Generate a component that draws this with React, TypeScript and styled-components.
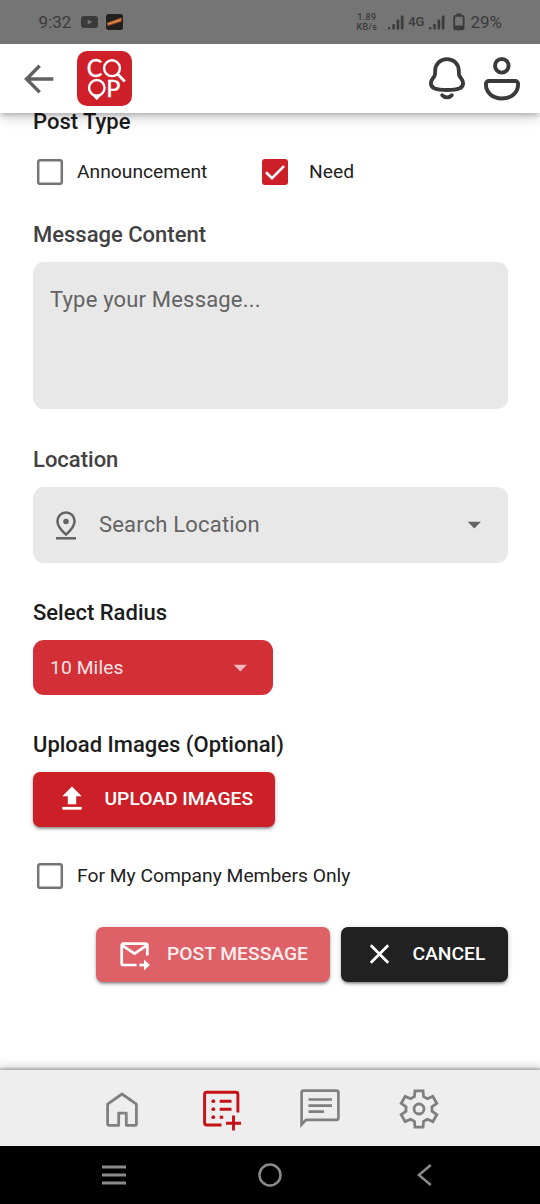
import React from "react";
import styled, { createGlobalStyle } from "styled-components";

const GlobalStyle = createGlobalStyle`
  * { box-sizing: border-box; }
  body { margin: 0; background: #fff; font-family: Roboto, "Liberation Sans", sans-serif; color: #212121; }
  button { font: inherit; border: 0; padding: 0; background: none; color: inherit; }
  svg { display: block; flex: none; overflow: visible; }
`;

const Screen = styled.div`
  width: 540px;
  height: 1204px;
  display: flex;
  flex-direction: column;
  overflow: hidden;
  background: #fff;
`;

const StatusBar = styled.div`
  height: 44px;
  flex: none;
  display: flex;
  align-items: center;
  justify-content: space-between;
  padding: 0 38px 0 38.5px;
  background: #757575;
  color: #3b3b3b;
  font-size: 17px;
  letter-spacing: 0.2px;
`;

const StatusGroup = styled.div`
  display: flex;
  align-items: center;
`;

const StatusText = styled.span<{ $size?: number; $left?: number; $weight?: number }>`
  font-size: ${(p) => p.$size ?? 17}px;
  font-weight: ${(p) => p.$weight ?? 400};
  margin-left: ${(p) => p.$left ?? 0}px;
  line-height: 20px;
  letter-spacing: 0;
`;

const StatusIcon = styled.span<{ $left: number }>`
  margin-left: ${(p) => p.$left}px;
`;

const NetSpeed = styled.div`
  font-size: 9px;
  font-weight: 500;
  line-height: 10px;
  text-align: center;
  letter-spacing: 0.3px;
`;

const Header = styled.header`
  position: relative;
  z-index: 1;
  height: 69px;
  flex: none;
  display: flex;
  align-items: center;
  padding: 0 20px 0 24px;
  background: #fff;
  box-shadow: 0 3px 5px -1px rgba(0, 0, 0, 0.22), 0 6px 12px rgba(0, 0, 0, 0.14);
`;

const LogoSlot = styled.div`
  margin-left: 23px;
  margin-right: auto;
`;

const HeaderActions = styled.div`
  display: flex;
  align-items: center;
  gap: 18px;
`;

const Main = styled.main`
  flex: 1;
  min-height: 0;
  margin-top: -4px;
  padding: 0 32.5px 0 33px;
`;

const Label = styled.div<{ $soft?: boolean; $top?: number }>`
  margin-top: ${(p) => p.$top ?? 0}px;
  height: 24px;
  line-height: 26px;
  font-size: 22px;
  font-weight: 500;
  white-space: nowrap;
  color: ${(p) => (p.$soft ? "#424242" : "#1c1c1c")};
`;

const CheckRow = styled.div<{ $top: number }>`
  display: flex;
  align-items: center;
  height: 28px;
  margin-top: ${(p) => p.$top}px;
  padding-left: 4px;
`;

const CheckLabel = styled.label<{ $gap: number; $width?: number }>`
  display: flex;
  align-items: center;
  gap: ${(p) => p.$gap}px;
  width: ${(p) => (p.$width ? `${p.$width}px` : "auto")};
  font-size: 19.25px;
  line-height: 24px;
  white-space: nowrap;
`;

const Field = styled.div<{ $height: number; $area?: boolean }>`
  display: flex;
  align-items: ${(p) => (p.$area ? "flex-start" : "center")};
  height: ${(p) => p.$height}px;
  margin-top: 16px;
  padding: ${(p) => (p.$area ? "25px 17px" : "0 26px 0 22px")};
  border-radius: 11px;
  background: #e8e8e8;
  color: #636363;
  font-size: 22px;
  line-height: 26px;
  letter-spacing: 0.18px;
`;

const FieldText = styled.span`
  flex: 1;
  margin-left: 22px;
`;

const RadiusSelect = styled.div`
  display: flex;
  align-items: center;
  justify-content: space-between;
  width: 240px;
  height: 55px;
  margin-top: 16px;
  padding: 0 25px 0 17px;
  border-radius: 11px;
  background: #d22f37;
  color: #fbe4e5;
  font-size: 19.25px;
  letter-spacing: 0.1px;
`;

const Button = styled.button<{ $width: number; $bg: string; $left: number; $gap: number; $top?: number; $color?: string }>`
  display: flex;
  align-items: center;
  width: ${(p) => p.$width}px;
  height: 55px;
  margin-top: ${(p) => p.$top ?? 0}px;
  padding: 0 0 2px ${(p) => p.$left}px;
  gap: ${(p) => p.$gap}px;
  border-radius: 7px;
  background: ${(p) => p.$bg};
  color: ${(p) => p.$color ?? "#fff"};
  font-size: 19.25px;
  font-weight: 500;
  white-space: nowrap;
  box-shadow: 0 3px 3px -2px rgba(0, 0, 0, 0.3), 0 2px 3px rgba(0, 0, 0, 0.2), 0 1px 6px rgba(0, 0, 0, 0.14);
`;

const Actions = styled.div`
  display: flex;
  justify-content: flex-end;
  gap: 11px;
  margin-top: 37px;
`;

const BottomNav = styled.nav`
  flex: none;
  height: 76px;
  display: flex;
  align-items: center;
  justify-content: center;
  background: #eee;
  box-shadow: 0 -1px 2px 1px rgba(0, 0, 0, 0.22), 0 -3px 9px 1px rgba(0, 0, 0, 0.16);
`;

const NavItem = styled.button`
  width: 99px;
  height: 76px;
  padding-top: 1px;
  display: flex;
  align-items: center;
  justify-content: center;
`;

const SystemNav = styled.div`
  flex: none;
  height: 58px;
  display: flex;
  align-items: center;
  justify-content: space-between;
  padding: 0 108px 0 101px;
  background: #000;
`;

const HomeSlot = styled.div`
  margin-right: 5px;
`;

const Signal = () => (
  <svg width="16" height="15" fill="#3b3b3b">
    <rect x="0" y="12" width="2.4" height="2.6" rx="1" />
    <rect x="4.3" y="9" width="2.6" height="5.6" rx="1" />
    <rect x="8.6" y="4.5" width="2.6" height="10" rx="1" />
    <rect x="12.8" y="0.5" width="2.7" height="14" rx="1" />
  </svg>
);

const Caret = ({ color }: { color: string }) => (
  <svg width="15" height="8">
    <path d="M0.7 0.8h13.2L7.3 7.5z" fill={color} />
  </svg>
);

const Checkbox = ({ checked = false }: { checked?: boolean }) => (
  <svg width="26" height="26">
    {checked ? (
      <>
        <rect width="26" height="26" rx="3" fill="#cc1f27" />
        <path d="M4 13.2l6 6L22 7.1" fill="none" stroke="#fff" strokeWidth="2.7" />
      </>
    ) : (
      <rect x="1.2" y="1.2" width="23.6" height="23.6" rx="1.8" fill="none" stroke="#757575" strokeWidth="2.5" />
    )}
  </svg>
);

const Logo = () => (
  <svg width="55" height="55">
    <rect width="55" height="55" rx="10" fill="#cf2029" />
    <g fontFamily="Lato, sans-serif" fill="#fff" stroke="#fff" strokeWidth="0.4">
      <text x="9.8" y="26.2" fontSize="25" textLength="15.5" lengthAdjust="spacingAndGlyphs">C</text>
      <text x="29.2" y="46" fontSize="23.5">P</text>
    </g>
    <g fill="none" stroke="#fff" strokeWidth="2.4">
      <circle cx="35" cy="17.2" r="7.9" />
      <path d="M40 22.4l7.8 8" strokeWidth="2.8" />
      <circle cx="19.8" cy="36.8" r="7.8" />
    </g>
    <path d="M14 42.4Q19.8 46 25.6 42.4L19.8 48.8z" fill="#fff" stroke="#fff" strokeWidth="0.8" />
  </svg>
);

export default function App() {
  return (
    <Screen>
      <GlobalStyle />
      <StatusBar>
        <StatusGroup>
          <StatusText>9:32</StatusText>
          <StatusIcon $left={10}>
            <svg width="17" height="12">
              <rect width="17" height="12" rx="3" fill="#3b3b3b" />
              <path d="M6.7 3.4v5.2L11.2 6z" fill="#757575" />
            </svg>
          </StatusIcon>
          <StatusIcon $left={8}>
            <svg width="17" height="16">
              <rect width="17" height="16" rx="2.5" fill="#22201e" />
              <path d="M1 8.7L15.8 3.5l-.4 4.2L1.5 12z" fill="#b4552a" />
              <path d="M2 9.6l13-4.5-.5 1.5L2.5 10.5z" fill="#d9a04a" />
            </svg>
          </StatusIcon>
        </StatusGroup>
        <StatusGroup>
          <NetSpeed>
            1.89
            <br />
            KB/s
          </NetSpeed>
          <StatusIcon $left={11}><Signal /></StatusIcon>
          <StatusText $size={13} $left={4} $weight={500}>4G</StatusText>
          <StatusIcon $left={5}><Signal /></StatusIcon>
          <StatusIcon $left={8}>
            <svg width="12" height="18">
              <path d="M3.5 0.5h5v2h-5z" fill="#3b3b3b" />
              <rect x="1.2" y="2.8" width="9.4" height="13.6" rx="1.2" fill="none" stroke="#3b3b3b" strokeWidth="1.8" />
              <path d="M1 12.5h10v4H1z" fill="#3b3b3b" />
            </svg>
          </StatusIcon>
          <StatusText $left={5}>29%</StatusText>
        </StatusGroup>
      </StatusBar>

      <Header>
        <svg width="30" height="28" fill="none" stroke="#616161" strokeWidth="3.4">
          <path d="M29.3 14H2.5M15.7 0.8L2.5 14l13.2 13.2" />
        </svg>
        <LogoSlot><Logo /></LogoSlot>
        <HeaderActions>
          <svg width="38" height="44" fill="none" stroke="#3a3a3a" strokeWidth="3.8">
            <path d="M19 2.2C12.2 2.2 7.4 7 7.2 13.2L7 17.5C6.8 20.500 2.900 21.500 2.900 26.300C2.900 31.500 8 33 19 33S35.100 31.500 35.100 26.300C35.100 21.500 31.200 20.500 31 17.500L30.800 13.200C30.600 7 25.800 2.200 19 2.200z" />
            <path d="M14.200 38.300c2.300 2.700 7.300 2.700 9.600 0" strokeLinecap="round" />
          </svg>
          <svg width="36" height="44" fill="none" stroke="#3a3a3a" strokeWidth="3.9">
            <circle cx="17.8" cy="8.8" r="6.8" />
            <path d="M5 24h26c1.800 0 3.100 1.300 3.100 3.100C34.100 35.800 27.500 41.500 18 41.500S1.900 35.800 1.900 27.100C1.900 25.300 3.200 24 5 24z" />
          </svg>
        </HeaderActions>
      </Header>

      <Main>
        <Label>Post Type</Label>
        <CheckRow $top={25}>
          <CheckLabel $gap={14} $width={225}><Checkbox />Announcement</CheckLabel>
          <CheckLabel $gap={21}><Checkbox checked />Need</CheckLabel>
        </CheckRow>

        <Label $soft $top={36}>Message Content</Label>
        <Field $height={147} $area>Type your Message...</Field>

        <Label $soft $top={38}>Location</Label>
        <Field $height={76}>
          <svg width="22" height="29" fill="none" stroke="#636363" strokeWidth="2.5">
            <path d="M11 1.6c-5 0-8.6 3.8-8.6 8.5 0 4.6 3.2 8.9 8.6 13.5 5.4-4.6 8.6-8.9 8.6-13.5 0-4.7-3.6-8.5-8.6-8.5z" />
            <circle cx="11" cy="10.5" r="2.8" fill="#636363" stroke="none" />
            <path d="M1 27.3h20" />
          </svg>
          <FieldText>Search Location</FieldText>
          <Caret color="#636363" />
        </Field>

        <Label $top={37}>Select Radius</Label>
        <RadiusSelect>10 Miles<Caret color="#f3b9bc" /></RadiusSelect>

        <Label $top={37}>Upload Images (Optional)</Label>
        <Button $width={242} $bg="#cc1f27" $left={28.5} $gap={23} $top={15.5}>
          <svg width="20" height="24" fill="#fff">
            <path d="M10 0.500L0.300 10.200h5.500v8h8.400v-8h5.500z" />
            <path d="M0.300 20.900h19.400v2.800H0.300z" />
          </svg>
          UPLOAD IMAGES
        </Button>

        <CheckRow $top={35.5}>
          <CheckLabel $gap={14}><Checkbox />For My Company Members Only</CheckLabel>
        </CheckRow>

        <Actions>
          <Button $width={234} $bg="#dd6167" $left={24} $gap={17} $color="#fdeeee">
            <svg width="30" height="26" fill="none" stroke="#fff" strokeWidth="2.7">
              <path d="M16.5 24H3.2c-.8 0-1.5-.7-1.5-1.5V4.2c0-.8.7-1.5 1.500-1.500h22.600c.8 0 1.500.7 1.500 1.500v10.300" />
              <path d="M2.200 4.300L14.500 12.700 26.800 4.300" />
              <path d="M19.300 24h6" />
              <path d="M24 18.500l5.800 5.500-5.800 5.500z" fill="#fff" stroke="none" />
            </svg>
            POST MESSAGE
          </Button>
          <Button $width={166.5} $bg="#212121" $left={29} $gap={23.5}>
            <svg width="19" height="19" fill="none" stroke="#fff" strokeWidth="2.7">
              <path d="M0.8 1.200l17.400 17.600M18.200 1.200L0.800 18.800" />
            </svg>
            CANCEL
          </Button>
        </Actions>
      </Main>

      <BottomNav>
        <NavItem>
          <svg width="32" height="36" fill="none" stroke="#808080" strokeWidth="2.8" strokeLinejoin="round">
            <path d="M2.800 34.300c-.8 0-1.200-.4-1.200-1.200V13.200L16 3l14.400 10.200v19.900c0 .8-.4 1.200-1.200 1.200H20.300V22.200h-7.600v12.100z" />
          </svg>
        </NavItem>
        <NavItem>
          <svg width="36" height="37" fill="none" stroke="#c61217" strokeWidth="2.9">
            <path d="M18.500 35H3.600c-1.200 0-2-.8-2-2V4.200c0-1.200.8-2 2-2h29.300c1.200 0 2 .8 2 2v18.300" />
            <path d="M16.700 11.200h11.800M16.700 19.200h11.800M16.700 27.300h3.500" />
            <path d="M23 33.200h15M30.500 25.500v15" />
            <g fill="#c61217" stroke="none">
              <circle cx="10.300" cy="11.200" r="1.900" />
              <circle cx="10.300" cy="19.200" r="1.900" />
              <circle cx="10.300" cy="27.200" r="1.900" />
            </g>
          </svg>
        </NavItem>
        <NavItem>
          <svg width="40" height="40" fill="none" stroke="#808080" strokeWidth="2.7">
            <path d="M1.600 35.500V3.600c0-1.200.8-2 2-2h32.800c1.200 0 2 .8 2 2v25.200c0 1.200-.8 2-2 2H6z" />
            <path d="M8.500 10.500h23.500M8.500 16.700h23.500M8.500 22.700h15.500" />
          </svg>
        </NavItem>
        <NavItem>
          <svg width="40" height="40" fill="none" stroke="#808080" strokeWidth="2.8">
            <path d="M16 1.800h8l.6 5.800 3.800 2.200 5.400-2.400 4 7-4.800 3.400v4.400l4.800 3.400-4 7-5.400-2.400-3.800 2.200-.6 5.800h-8l-.6-5.800-3.800-2.200-5.400 2.400-4-7L7 22.200v-4.400l-4.800-3.400 4-7 5.400 2.400 3.800-2.200z" />
            <circle cx="20" cy="20" r="5" />
          </svg>
        </NavItem>
      </BottomNav>

      <SystemNav>
        <svg width="26" height="20" stroke="#8a8a8a" strokeWidth="2.8">
          <path d="M1 2h24M1 10h24M1 18h24" />
        </svg>
        <HomeSlot>
          <svg width="24" height="24" fill="none" stroke="#8a8a8a" strokeWidth="2.5">
            <circle cx="12" cy="12" r="10.5" />
          </svg>
        </HomeSlot>
        <svg width="15" height="22" fill="none" stroke="#8a8a8a" strokeWidth="2.5">
          <path d="M13.8 1L1.900 11l11.900 10" />
        </svg>
      </SystemNav>
    </Screen>
  );
}
